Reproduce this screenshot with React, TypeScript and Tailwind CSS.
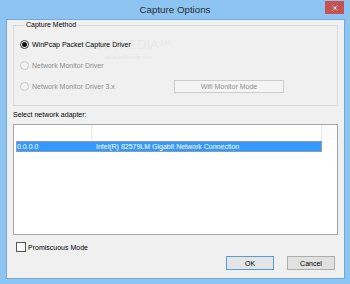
import { X } from "lucide-react";

function Radio({ checked, disabled }: { checked?: boolean; disabled?: boolean }) {
  return (
    <span
      className={`flex h-[9px] w-[9px] items-center justify-center rounded-full border ${
        disabled ? "border-[#c9c9c9] bg-[#f3f3f3]" : "border-[#333] bg-white"
      }`}
    >
      {checked && <span className="h-[5px] w-[5px] rounded-full bg-[#111]" />}
    </span>
  );
}

function Option({ label, checked, disabled }: { label: string; checked?: boolean; disabled?: boolean }) {
  return (
    <div className="flex w-[154px] items-center gap-[3px]">
      <Radio checked={checked} disabled={disabled} />
      <span className={disabled ? "text-[#8f8f8f]" : "text-black"}>{label}</span>
    </div>
  );
}

export default function App() {
  return (
    <div
      className="relative flex h-[284px] w-[350px] flex-col bg-[#8ec4f2] text-[7px] leading-[9px]"
      style={{ fontFamily: '"Liberation Sans", Arial, sans-serif' }}
    >
      {/* title bar */}
      <div className="relative flex h-[19px] items-center justify-center">
        <span className="text-[9.75px] text-[#2b2b2b]">Capture Options</span>
        <div className="absolute right-[6px] top-[1px] flex h-[13px] w-[19px] items-center justify-center bg-[#c75050]">
          <X size={8} strokeWidth={3} className="text-white" />
        </div>
      </div>

      <div className="mb-[5px] ml-[6px] mr-[5px] flex flex-1 border border-[#6fa8dc]">
        <div className="relative flex flex-1 flex-col bg-[#f0f0f0] px-[6px]">
          {/* watermark */}
          <div className="pointer-events-none absolute left-[78px] top-[18px] flex flex-col items-center">
            <span className="text-[13px] leading-[14px] text-[#e9e9e9]">SOFTPEDIA™</span>
            <span className="mt-[2px] text-[5.5px] leading-[7px] text-[#e6e6e6]">www.softpedia.com</span>
          </div>

          <fieldset className="relative border border-[#d9d9d9] pb-[8px] pl-[6px]">
            <legend className="ml-[4px] px-[2px] leading-[10px] text-black">Capture Method</legend>
            <div className="flex flex-col pt-[4px]">
              <div className="flex h-[21px] items-center">
                <Option label="WinPcap Packet Capture Driver" checked />
              </div>
              <div className="flex h-[21px] items-center">
                <Option label="Network Monitor Driver" disabled />
              </div>
              <div className="flex h-[21px] items-center">
                <Option label="Network Monitor Driver 3.x" disabled />
                <div className="flex h-[13px] w-[110px] items-center justify-center border border-[#cdcdcd] bg-[#f4f4f4] text-[#8f8f8f]">
                  Wifi Monitor Mode
                </div>
              </div>
            </div>
          </fieldset>

          <div className="mt-[4px] h-[10px] leading-[10px] text-black">Select network adapter:</div>

          <div className="mt-[4px] flex h-[111px] flex-col border border-[#a6a6a6] bg-white">
            <div className="flex h-[16px]">
              <div className="w-[78px] border-r border-[#e8e8e8]" />
              <div className="w-[230px] border-r border-[#e8e8e8]" />
              <div className="flex-1 bg-[#fbfbfb]" />
            </div>
            <div className="ml-[2px] flex h-[11px] w-[306px] items-center border border-[#8f9aa6] bg-[#3399ff] text-white">
              <span className="w-[79px]">0.0.0.0</span>
              <span>Intel(R) 82579LM Gigabit Network Connection</span>
            </div>
          </div>

          <div className="ml-[3px] mt-[7px] flex h-[10px] items-center gap-[2px]">
            <span className="h-[10px] w-[10px] border border-[#555] bg-white" />
            <span className="text-black">Promiscuous Mode</span>
          </div>

          <div className="mt-[4px] flex justify-end gap-[13px] pr-[3px]">
            <div className="flex h-[14px] w-[48px] items-center justify-center border border-[#4f9de6] bg-[#e5e5e5] text-black">
              OK
            </div>
            <div className="flex h-[14px] w-[48px] items-center justify-center border border-[#adadad] bg-[#e1e1e1] text-black">
              Cancel
            </div>
          </div>
        </div>
      </div>
    </div>
  );
}
